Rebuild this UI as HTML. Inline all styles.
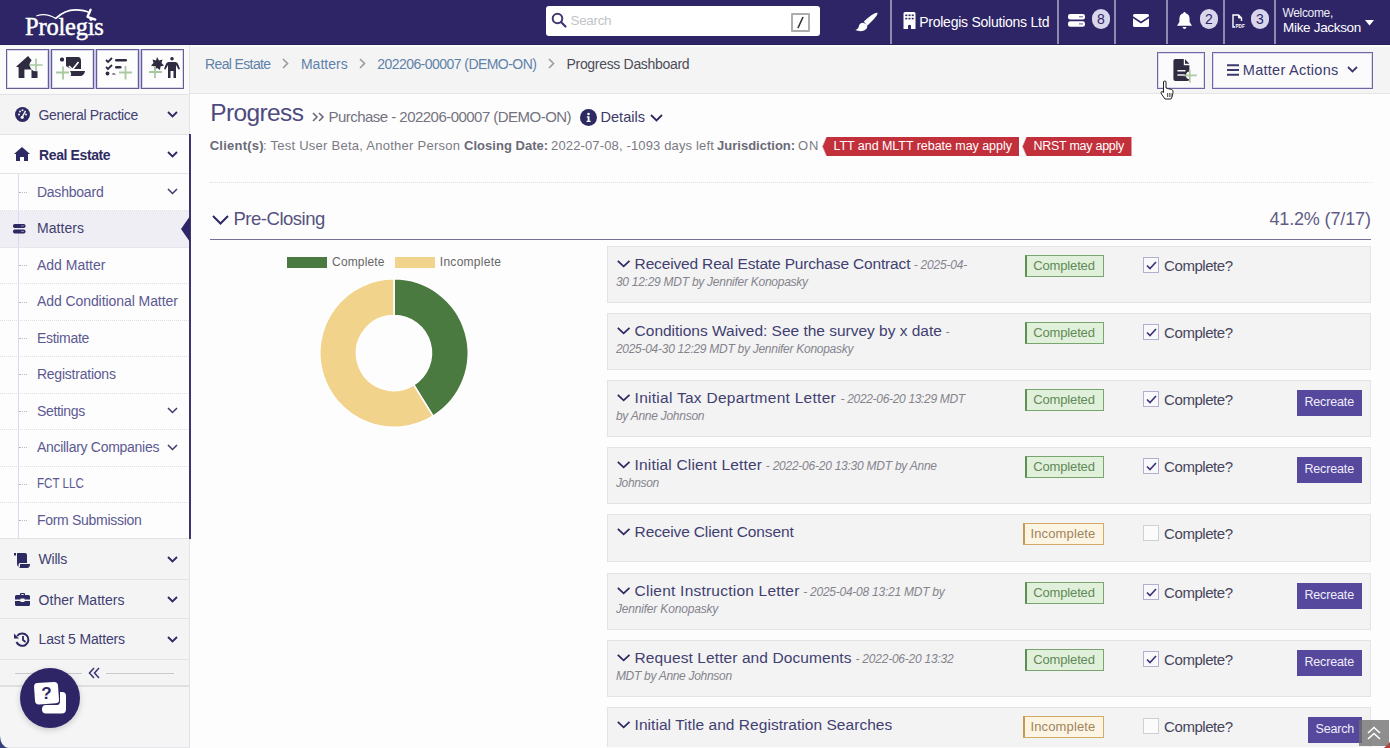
<!DOCTYPE html>
<html><head><meta charset="utf-8">
<style>
*{box-sizing:border-box;margin:0;padding:0}
html,body{width:1390px;height:748px;overflow:hidden;background:#fdfdfd;font-family:"Liberation Sans",sans-serif;position:relative}
.a{position:absolute}
.tx{position:absolute;white-space:nowrap;line-height:1}
svg{position:absolute;overflow:visible}
.sep{position:absolute;top:0;width:2px;height:44px;background:#8f8bb0}
.badge{position:absolute;top:9px;width:18px;height:20px;border-radius:9px;background:#d9d6ec;color:#2e2567;font-size:14px;text-align:center;line-height:20px}
.tb{position:absolute;top:49px;width:43px;height:40px;border:1px solid #635f8e;box-shadow:inset 0 0 0 1px #d9d6ef;background:#fdfdfd}
.row{position:absolute;left:0;width:189px;background:#f4f4f5;border-bottom:1px solid #e3e3e6}
.srow{position:absolute;left:0;width:189px;background:#fdfdfd;border-bottom:1px dotted #dedee3}
.card{position:absolute;left:607px;width:764px;background:#f3f3f4;border:1px solid #e3e3e5}
.st{position:absolute;height:22px}
.done{left:417px;width:79px;background:#e1f0da;border:1px solid #79a56e;border-left:2px solid #5d8f52}
.inc{left:415px;width:81px;background:#fdf5e4;border:1px solid #d2ac66;border-left:2px solid #c49a50}
.cb{position:absolute;left:536px;width:16px;height:16px;border:1px solid #b3b0cf;background:#f9f9fb}
.btn{position:absolute;height:26px;background:#56489d}
</style></head><body>

<!-- NAVBAR -->
<div class="a" style="left:0;top:0;width:1390px;height:45px;background:#2d2566"></div>
<div class="a" style="left:0;top:44px;width:1390px;height:1px;background:#282058"></div>
<!-- logo -->
<svg style="left:36px;top:8px" width="62" height="14" viewBox="0 0 62 14">
  <path d="M0.8 7.8 Q10 4.5 19.7 10.4" fill="none" stroke="#fff" stroke-width="1.2" stroke-linecap="round"/>
  <path d="M19.7 10.4 C26 4.5 33 1.8 39.3 1.8 C46 1.8 51 3.2 53.6 4.8" fill="none" stroke="#fff" stroke-width="1.8" stroke-linecap="round"/>
  <path d="M54.6 1.8 L51.5 8.8 L59.3 11.6" fill="none" stroke="#fff" stroke-width="2.3" stroke-linejoin="round" stroke-linecap="round"/>
</svg>
<!-- search -->
<div class="a" style="left:546px;top:6px;width:274px;height:30px;background:#fff;border-radius:3px"></div>
<svg style="left:551px;top:12px" width="16" height="16" viewBox="0 0 16 16">
  <circle cx="6.5" cy="6.5" r="4.8" fill="none" stroke="#3d3773" stroke-width="2"/>
  <path d="M10 10 L14.5 14.5" stroke="#3d3773" stroke-width="2.2" stroke-linecap="round"/>
</svg>
<div class="a" style="left:791px;top:12.5px;width:19px;height:19px;border:2px solid #adadb0;border-radius:1px"></div>
<svg style="left:791px;top:12.5px" width="19" height="19" viewBox="0 0 19 19"><path d="M11.8 4.5 L7.2 14.5" stroke="#333" stroke-width="1.6" stroke-linecap="round"/></svg>
<!-- brush -->
<svg style="left:855px;top:12px" width="23" height="20" viewBox="0 0 23 20">
  <path d="M22.5 0.8 C20 0.2 12.5 5.5 8.8 9.8 L12.6 13.4 C16.8 9.6 23.2 3.2 22.5 0.8 Z" fill="#fff"/>
  <path d="M8 10.8 C5.3 10.8 4 13 3.7 14.8 C3.5 16.4 2 17.6 0.3 18 C4 19.8 9.5 19.6 11.8 16.3 C12.6 14.9 12.3 12.8 11.3 12 Z" fill="#fff"/>
</svg>
<div class="sep" style="left:890px"></div>
<!-- building -->
<svg style="left:903px;top:12px" width="13" height="17" viewBox="0 0 13 17">
  <path d="M0.5 1.5 Q0.5 0 2 0 L11 0 Q12.5 0 12.5 1.5 L12.5 17 L8 17 L8 13.5 Q6.5 12 5 13.5 L5 17 L0.5 17 Z" fill="#fff"/>
  <g fill="#2d2566"><rect x="2.3" y="2.5" width="2" height="1.6"/><rect x="5.5" y="2.5" width="2" height="1.6"/><rect x="8.7" y="2.5" width="2" height="1.6"/><rect x="2.3" y="5.8" width="2" height="1.6"/><rect x="5.5" y="5.8" width="2" height="1.6"/><rect x="8.7" y="5.8" width="2" height="1.6"/></g>
</svg>
<div class="sep" style="left:1057px"></div>
<!-- server -->
<svg style="left:1068px;top:14px" width="17" height="13" viewBox="0 0 17 13">
  <rect x="0" y="0" width="17" height="5.5" rx="2.2" fill="#fff"/><rect x="0" y="7.2" width="17" height="5.5" rx="2.2" fill="#fff"/>
  <rect x="11" y="2" width="4" height="1.4" fill="#8c86b8"/><rect x="11" y="9.2" width="4" height="1.4" fill="#8c86b8"/>
</svg>
<div class="badge" style="left:1092px">8</div>
<div class="sep" style="left:1114px"></div>
<!-- mail -->
<svg style="left:1133px;top:14px" width="16" height="13" viewBox="0 0 16 13">
  <path d="M0 1.5 Q0 0 1.5 0 L14.5 0 Q16 0 16 1.5 L16 2.2 L8 7.5 L0 2.2 Z" fill="#fff"/>
  <path d="M0 4.3 L8 9.6 L16 4.3 L16 11.5 Q16 13 14.5 13 L1.5 13 Q0 13 0 11.5 Z" fill="#fff"/>
</svg>
<div class="sep" style="left:1166px"></div>
<!-- bell -->
<svg style="left:1177px;top:12px" width="15" height="17" viewBox="0 0 15 17">
  <path d="M7.5 0 C8.3 0 8.7 0.6 8.7 1.3 C11.5 1.9 12.6 4.3 12.6 7 L12.6 10 L15 13.8 L0 13.8 L2.4 10 L2.4 7 C2.4 4.3 3.5 1.9 6.3 1.3 C6.3 0.6 6.7 0 7.5 0 Z" fill="#fff"/>
  <path d="M5.5 15 L9.5 15 Q9 17 7.5 17 Q6 17 5.5 15 Z" fill="#fff"/>
</svg>
<div class="badge" style="left:1200px">2</div>
<div class="sep" style="left:1223px"></div>
<!-- pdf -->
<svg style="left:1232px;top:14px" width="14" height="14" viewBox="0 0 14 14">
  <path d="M1 11 L1 1 L6.5 1 L9.5 4 L9.5 7" fill="none" stroke="#fff" stroke-width="1.4"/>
  <path d="M6.5 1 L6.5 4 L9.5 4" fill="#fff" stroke="#fff" stroke-width="1"/>
  <path d="M1 11 L1 13 L3 13" fill="none" stroke="#fff" stroke-width="1.4"/>
  <text x="3.5" y="13.5" font-family="Liberation Sans" font-size="4.6" font-weight="bold" fill="#fff">PDF</text>
</svg>
<div class="badge" style="left:1251px">3</div>
<div class="sep" style="left:1274px"></div>
<svg style="left:1365px;top:20px" width="9" height="6" viewBox="0 0 9 6"><path d="M0 0 L9 0 L4.5 5.5 Z" fill="#fff"/></svg>

<!-- SUBHEADER -->
<div class="a" style="left:190px;top:45px;width:1200px;height:49px;background:#f4f4f5;border-top:2px solid #fcfcfd;border-bottom:1px solid #e6e6e8"></div>
<div class="a" style="left:0;top:45px;width:190px;height:50px;background:#fafafb;border-right:1px solid #e4e4e6;border-bottom:1px solid #e2e2e5"></div>
<div class="a" style="left:48px;top:49px;width:3px;height:40px;background:#c9c5ec"></div>
<div class="a" style="left:93px;top:49px;width:3px;height:40px;background:#c9c5ec"></div>
<div class="a" style="left:138px;top:49px;width:3px;height:40px;background:#c9c5ec"></div>
<div class="tb" style="left:5.5px;width:43px"></div>
<div class="tb" style="left:50.5px;width:43px"></div>
<div class="tb" style="left:95.5px;width:43px"></div>
<div class="tb" style="left:140.5px;width:43px"></div>
<!-- toolbar icons -->
<svg style="left:16px;top:56px" width="27" height="23" viewBox="0 0 27 23">
  <path d="M12 0 L0 10.8 L2.6 11.2 L2.6 22 L8.4 22 L8.4 13.4 L15.5 13.4 L15.5 22 L21.5 22 L21.5 11 Z" fill="#2f2c41"/>
  <circle cx="20" cy="9" r="6.3" fill="#fdfdfd"/>
  <path d="M20 2.4 L20 14.7 M13.3 9 L26.6 9" stroke="#a9c9a1" stroke-width="1.7"/>
</svg>
<svg style="left:55px;top:57px" width="32" height="22" viewBox="0 0 32 22">
  <rect x="5" y="0.5" width="4" height="4" rx="1.5" fill="#2f2c41"/>
  <path d="M11 0 L23 0 Q26 0 26 4 L26 12 L16 12 L11 9 Z" fill="#2f2c41"/>
  <path d="M14 9 L17.5 12.5 L23.5 5" fill="none" stroke="#fff" stroke-width="1.7"/>
  <path d="M15 14 L30 14 Q29.5 18 26 19 L15.5 19 Q17 17 15 14 Z" fill="#2f2c41"/>
  <path d="M8 9.5 L8 22.5 M1 15.5 L14 15.5" stroke="#a9c9a1" stroke-width="1.8"/>
</svg>
<svg style="left:105px;top:57px" width="27" height="22" viewBox="0 0 27 22">
  <path d="M1 3 L3 5 L7 1 M1 10 L3 12 L7 8" fill="none" stroke="#2f2c41" stroke-width="1.8"/>
  <rect x="10" y="2" width="12" height="2.6" rx="1.3" fill="#2f2c41"/>
  <rect x="10" y="9" width="6.5" height="2.6" rx="1.3" fill="#2f2c41"/>
  <circle cx="2.5" cy="16.5" r="1.9" fill="#2f2c41"/>
  <path d="M7 17.5 Q8 15 11 17.5 Z" fill="#2f2c41"/>
  <path d="M20.5 9 L20.5 22.5 M14 15.5 L27 15.5" stroke="#a9c9a1" stroke-width="1.8"/>
</svg>
<svg style="left:150px;top:57px" width="30" height="22" viewBox="0 0 30 22">
  <path d="M7 0 L9 3.5 L12.5 2.5 L11.5 6 L14 8.5 L10.5 9.5 L10 13 L7 11 L4 13 L4.5 9.5 L1 8.5 L3.5 6 L2.5 2.5 L6 3.5 Z" fill="#2f2c41"/>
  <circle cx="22" cy="1.8" r="1.8" fill="#2f2c41"/>
  <path d="M18.5 5 L25.5 5 Q27.5 5 28.5 8 L30 12 L28.5 12.5 L26 8 L26 21 L23.5 21 L23.5 14 L20.5 14 L20.5 21 L18 21 L18 8 L15.5 12.5 L14 12 L15.5 8 Q16.5 5 18.5 5 Z" fill="#2f2c41"/>
  <path d="M5 9 L5 21 M-1 15 L12 15" stroke="#a9c9a1" stroke-width="1.8"/>
</svg>

<!-- subheader right buttons -->
<div class="a" style="left:1157px;top:52px;width:48px;height:37px;border:1px solid #6d67a6;box-shadow:inset 0 0 0 1px #dcd9ee;background:#fbfbfc"></div>
<svg style="left:1173px;top:59px" width="25" height="25" viewBox="0 0 25 25">
  <path d="M2.4 0 L10.8 0 L10.8 6.2 L16.4 6.2 L16.4 20 Q16.4 22 14.4 22 L2.4 22 Q0.4 22 0.4 20 L0.4 2 Q0.4 0 2.4 0 Z" fill="#2f2c41"/>
  <path d="M12 0.3 L16.4 4.8 L12 4.8 Z" fill="#2f2c41"/>
  <circle cx="16.8" cy="16.4" r="3.8" fill="#fdfdfd"/>
  <path d="M4.4 11.7 L12.5 11.7 M4.4 16 L11.5 16" stroke="#f4f4f6" stroke-width="1.6"/>
  <path d="M16.8 10.4 L16.8 23.4 M10.4 16.4 L23.8 16.4" stroke="#a9c9a1" stroke-width="1.7"/>
</svg>
<div class="a" style="left:1212px;top:52px;width:161px;height:37px;border:1px solid #6d67a6;box-shadow:inset 0 0 0 1px #dcd9ee;background:#fbfbfc"></div>
<svg style="left:1227px;top:64px" width="12" height="12" viewBox="0 0 12 12"><path d="M0 1.2 H12 M0 6 H12 M0 10.8 H12" stroke="#3d3a6d" stroke-width="2"/></svg>
<svg style="left:1347px;top:66px" width="11" height="7" viewBox="0 0 11 7"><path d="M1 1 L5.5 5.5 L10 1" fill="none" stroke="#3d3a6d" stroke-width="1.8"/></svg>
<!-- breadcrumb separators -->
<svg style="left:282px;top:58px" width="7" height="11" viewBox="0 0 7 11"><path d="M1 1 L5.5 5.5 L1 10" fill="none" stroke="#9a9aa0" stroke-width="1.6"/></svg>
<svg style="left:359px;top:58px" width="7" height="11" viewBox="0 0 7 11"><path d="M1 1 L5.5 5.5 L1 10" fill="none" stroke="#9a9aa0" stroke-width="1.6"/></svg>
<svg style="left:548px;top:58px" width="7" height="11" viewBox="0 0 7 11"><path d="M1 1 L5.5 5.5 L1 10" fill="none" stroke="#9a9aa0" stroke-width="1.6"/></svg>

<!-- SIDEBAR -->
<div class="a" style="left:0;top:95px;width:190px;height:653px;background:#f5f5f6;border-right:1px solid #e3e3e6"></div>
<div class="row" style="top:95px;height:40px"></div>
<div class="srow" style="top:135px;height:39px;border-bottom:1px solid #e6e6e9"></div>
<div class="srow" style="top:174px;height:36.5px"></div>
<div class="srow" style="top:210.5px;height:37px;background:#efeef5"></div>
<div class="srow" style="top:247.5px;height:36.5px"></div>
<div class="srow" style="top:284px;height:36.5px"></div>
<div class="srow" style="top:320.5px;height:36.5px"></div>
<div class="srow" style="top:357px;height:36.5px"></div>
<div class="srow" style="top:393.5px;height:36.5px"></div>
<div class="srow" style="top:430px;height:36.5px"></div>
<div class="srow" style="top:466.5px;height:36px"></div>
<div class="srow" style="top:502.5px;height:36.5px;border-bottom:1px solid #e3e3e6"></div>
<div class="row" style="top:539px;height:41px"></div>
<div class="row" style="top:580px;height:39px"></div>
<div class="row" style="top:619px;height:41px"></div>
<div class="row" style="top:660px;height:27px;border-bottom:2px solid #e0e0e3"></div>
<!-- tree line -->
<div class="a" style="left:18px;top:174px;width:1px;height:365px;background:#d9dcef"></div>
<div class="a" style="left:19px;top:192px;width:8px;border-top:1px dotted #b8b8c4"></div>
<div class="a" style="left:19px;top:265px;width:8px;border-top:1px dotted #b8b8c4"></div>
<div class="a" style="left:19px;top:302px;width:8px;border-top:1px dotted #b8b8c4"></div>
<div class="a" style="left:19px;top:338px;width:8px;border-top:1px dotted #b8b8c4"></div>
<div class="a" style="left:19px;top:374px;width:8px;border-top:1px dotted #b8b8c4"></div>
<div class="a" style="left:19px;top:411px;width:8px;border-top:1px dotted #b8b8c4"></div>
<div class="a" style="left:19px;top:447px;width:8px;border-top:1px dotted #b8b8c4"></div>
<div class="a" style="left:19px;top:484px;width:8px;border-top:1px dotted #b8b8c4"></div>
<div class="a" style="left:19px;top:520px;width:8px;border-top:1px dotted #b8b8c4"></div>
<!-- purple right border -->
<div class="a" style="left:188.5px;top:134px;width:2.5px;height:405px;background:#3b3570"></div>
<svg style="left:180.5px;top:216px" width="9" height="26" viewBox="0 0 9 26"><path d="M9 0 L0 13 L9 26 Z" fill="#2d2566"/></svg>
<!-- sidebar icons -->
<svg style="left:14.5px;top:107px" width="15" height="15" viewBox="0 0 15 15">
  <circle cx="7.5" cy="7.5" r="7.5" fill="#2d2962"/>
  <circle cx="4" cy="7.5" r="1" fill="#f4f4f5"/><circle cx="5" cy="4.5" r="1" fill="#f4f4f5"/><circle cx="7.5" cy="3.2" r="1" fill="#f4f4f5"/><circle cx="11" cy="7.5" r="1" fill="#f4f4f5"/>
  <path d="M10.5 3.8 L7.5 9.5" stroke="#f4f4f5" stroke-width="1.5"/><circle cx="7.2" cy="10.3" r="1.6" fill="#f4f4f5"/>
</svg>
<svg style="left:14px;top:147px" width="16" height="14" viewBox="0 0 16 14">
  <path d="M8 0 L16 7 L14 7 L14 14 L10 14 L10 10 L6 10 L6 14 L2 14 L2 7 L0 7 Z" fill="#2d2962"/>
</svg>
<svg style="left:13px;top:224px" width="12.5" height="9.5" viewBox="0 0 12.5 9.5">
  <rect x="0" y="0" width="12.5" height="4" rx="1.7" fill="#2d2962"/><rect x="0" y="5.5" width="12.5" height="4" rx="1.7" fill="#2d2962"/>
  <rect x="8" y="1.4" width="3" height="1" fill="#8c86b8"/><rect x="8" y="6.9" width="3" height="1" fill="#8c86b8"/>
</svg>
<svg style="left:14px;top:553px" width="16" height="15" viewBox="0 0 16 15">
  <rect x="0" y="0" width="2" height="2.5" fill="#2d2962"/>
  <path d="M3 0 L11 0 Q13 0 13 2 L13 10 L6 10 Q4.5 10 4.5 12 L4.5 14 Q3 13 3 11 Z" fill="#2d2962"/>
  <path d="M6 11 L16 11 Q16 15 13 15 L5 15 Q6.5 14 6 11 Z" fill="#2d2962"/>
</svg>
<svg style="left:14.5px;top:593px" width="15" height="13" viewBox="0 0 15 13">
  <path d="M5 2 L5 0.8 Q5 0 6 0 L9 0 Q10 0 10 0.8 L10 2 L13.5 2 Q15 2 15 3.5 L15 6.5 L9.5 6.5 L9.5 5.5 L5.5 5.5 L5.5 6.5 L0 6.5 L0 3.5 Q0 2 1.5 2 Z M6.3 1 L6.3 2 L8.7 2 L8.7 1 Z" fill="#2d2962" fill-rule="evenodd"/>
  <path d="M0 8 L5.5 8 L5.5 9 L9.5 9 L9.5 8 L15 8 L15 11.5 Q15 13 13.5 13 L1.5 13 Q0 13 0 11.5 Z" fill="#2d2962"/>
</svg>
<svg style="left:14px;top:632px" width="16" height="15" viewBox="0 0 16 15">
  <path d="M3.2 4 A6.2 6.2 0 1 1 2.5 10" fill="none" stroke="#2d2962" stroke-width="2"/>
  <path d="M0 1.5 L0 6.5 L5 6.5 Z" fill="#2d2962"/>
  <path d="M9 4 L9 8 L11.5 10" fill="none" stroke="#2d2962" stroke-width="1.8"/>
</svg>
<!-- sidebar chevrons -->
<svg style="left:166.5px;top:111px" width="11" height="7" viewBox="0 0 11 7"><path d="M1 1 L5.5 5.5 L10 1" fill="none" stroke="#2d2962" stroke-width="1.8"/></svg>
<svg style="left:166.5px;top:151px" width="11" height="7" viewBox="0 0 11 7"><path d="M1 1 L5.5 5.5 L10 1" fill="none" stroke="#2d2962" stroke-width="1.8"/></svg>
<svg style="left:166.5px;top:188px" width="11" height="7" viewBox="0 0 11 7"><path d="M1 1 L5.5 5.5 L10 1" fill="none" stroke="#3d3a72" stroke-width="1.5"/></svg>
<svg style="left:166.5px;top:407px" width="11" height="7" viewBox="0 0 11 7"><path d="M1 1 L5.5 5.5 L10 1" fill="none" stroke="#3d3a72" stroke-width="1.5"/></svg>
<svg style="left:167px;top:444px" width="11" height="7" viewBox="0 0 11 7"><path d="M1 1 L5.5 5.5 L10 1" fill="none" stroke="#3d3a72" stroke-width="1.5"/></svg>
<svg style="left:166.5px;top:556px" width="11" height="7" viewBox="0 0 11 7"><path d="M1 1 L5.5 5.5 L10 1" fill="none" stroke="#2d2962" stroke-width="1.8"/></svg>
<svg style="left:166.5px;top:596px" width="11" height="7" viewBox="0 0 11 7"><path d="M1 1 L5.5 5.5 L10 1" fill="none" stroke="#2d2962" stroke-width="1.8"/></svg>
<svg style="left:166.5px;top:636px" width="11" height="7" viewBox="0 0 11 7"><path d="M1 1 L5.5 5.5 L10 1" fill="none" stroke="#2d2962" stroke-width="1.8"/></svg>
<!-- collapse -->
<div class="a" style="left:15px;top:673px;width:67px;height:1px;background:#c9c9d0"></div>
<div class="a" style="left:106px;top:673px;width:68px;height:1px;background:#c9c9d0"></div>
<svg style="left:88px;top:667px" width="12" height="12" viewBox="0 0 12 12"><path d="M6 1 L1.5 6 L6 11 M11 1 L6.5 6 L11 11" fill="none" stroke="#3d3a78" stroke-width="1.6"/></svg>
<div class="a" style="left:0;top:747px;width:190px;height:1px;background:#e6e6e9"></div>
<!-- help bubble -->
<div class="a" style="left:20px;top:668px;width:60px;height:60px;border-radius:30px;background:#2d2566;box-shadow:0 2px 6px rgba(0,0,0,0.18)"></div>
<svg style="left:34px;top:682px" width="33" height="33" viewBox="0 0 33 33">
  <path d="M9 10 L28 10 Q32 10 32 14 L32 27 Q32 31.5 27.5 31.5 L12 31.5 Q8 31.5 8 27.5 Z" fill="#fff"/>
  <path d="M8 10 L8 27 Q8 23 12 23 L23 23 Q26 23 26 19 L26 10 Z" fill="#2d2566"/>
  <path d="M4 0.5 L20.5 0.5 Q24.5 0.5 24.5 4.5 L24.5 19 Q24.5 22 21 22 L4.5 22 Q0.5 22 0.5 18 L0.5 4.5 Q0.5 0.5 4 0.5 Z" fill="#fff" transform="rotate(-4 12 11)"/>
  <text x="12.5" y="17" text-anchor="middle" font-family="Liberation Sans" font-weight="bold" font-size="17" fill="#2d2566">?</text>
</svg>
<svg style="left:0;top:736px" width="9" height="12" viewBox="0 0 9 12"><path d="M0 0 Q0.5 10 8 12 L0 12 Z" fill="#33407a"/></svg>
<svg style="left:1384px;top:742px" width="6" height="6" viewBox="0 0 6 6"><path d="M6 0 L6 6 L0 6 Z" fill="#c0393a"/></svg>

<!-- MAIN HEADER -->
<svg style="left:312px;top:112px" width="13" height="10" viewBox="0 0 13 10"><path d="M1 1 L5 5 L1 9 M7 1 L11 5 L7 9" fill="none" stroke="#6c6b75" stroke-width="1.6"/></svg>
<div class="a" style="left:579.5px;top:108.5px;width:17px;height:17px;border-radius:9px;background:#2d2962"></div>
<svg style="left:579.5px;top:108.5px" width="17" height="17" viewBox="0 0 17 17">
  <circle cx="8.5" cy="5" r="1.3" fill="#fff"/>
  <path d="M6.8 7.3 L9.5 7.3 L9.5 11.8 L10.6 11.8 L10.6 13 L6.6 13 L6.6 11.8 L7.7 11.8 L7.7 8.5 L6.8 8.5 Z" fill="#fff"/>
</svg>
<svg style="left:649.5px;top:114px" width="13" height="8" viewBox="0 0 13 8"><path d="M1 1 L6.5 6.5 L12 1" fill="none" stroke="#2d2962" stroke-width="1.8"/></svg>
<!-- tags -->
<svg style="left:822px;top:136.5px" width="197" height="19" viewBox="0 0 197 19"><path d="M4.5 0 L197 0 L197 19 L4.5 19 L0.5 9.5 Z" fill="#c2303c"/><path d="M4.5 0 L0.5 9.5 L4.5 19" fill="none" stroke="#e7a3a8" stroke-width="1" opacity="0.6"/></svg>
<svg style="left:1022px;top:136.5px" width="109.5" height="19" viewBox="0 0 109.5 19"><path d="M4.5 0 L109.5 0 L109.5 19 L4.5 19 L0.5 9.5 Z" fill="#c2303c"/><path d="M4.5 0 L0.5 9.5 L4.5 19" fill="none" stroke="#e7a3a8" stroke-width="1" opacity="0.6"/></svg>

<div class="a" style="left:210px;top:182px;width:1162px;border-top:1px dotted #e2e2e6"></div>
<svg style="left:212px;top:215px" width="17" height="10" viewBox="0 0 17 10"><path d="M1 1 L8.5 8.5 L16 1" fill="none" stroke="#2d2962" stroke-width="2"/></svg>
<div class="a" style="left:210px;top:238.5px;width:1161px;height:1.5px;background:#75729a"></div>

<!-- CHART -->
<div class="a" style="left:286.5px;top:256.5px;width:40px;height:11.5px;background:#4a7a40"></div>
<div class="a" style="left:394.5px;top:256.5px;width:40px;height:11.5px;background:#f2d38b"></div>
<svg style="left:313.6px;top:272.8px" width="160" height="160" viewBox="-80 -80 160 160">
  <path d="M0.00 -74.20 A74.2 74.2 0 0 1 39.06 63.09 L19.74 31.88 A37.5 37.5 0 0 0 0.00 -37.50 Z" fill="#4a7a40" stroke="#fff" stroke-width="1.5"/>
  <path d="M39.06 63.09 A74.2 74.2 0 1 1 -0.00 -74.20 L-0.00 -37.50 A37.5 37.5 0 1 0 19.74 31.88 Z" fill="#f2d38b" stroke="#fff" stroke-width="1.5"/>
</svg>

<!-- CARDS -->
<div class="card" style="top:246px;height:57px;">
<div class="st done" style="top:8px"></div>
<div class="cb" style="top:10px;left:535px;"></div>
<svg style="left:8.5px;top:13.4px" width="14" height="8" viewBox="0 0 14 8"><path d="M0.8 0.8 L6.65 6.3 L12.5 0.8" fill="none" stroke="#2d2962" stroke-width="1.8"/></svg>
<svg style="left:538px;top:14px" width="11" height="9" viewBox="0 0 11 9"><path d="M1 4.5 L4 7.5 L10 1" fill="none" stroke="#3b357a" stroke-width="1.7"/></svg>
</div>
<div class="card" style="top:313px;height:57px;">
<div class="st done" style="top:8px"></div>
<div class="cb" style="top:10px;left:535px;"></div>
<svg style="left:8.5px;top:13.4px" width="14" height="8" viewBox="0 0 14 8"><path d="M0.8 0.8 L6.65 6.3 L12.5 0.8" fill="none" stroke="#2d2962" stroke-width="1.8"/></svg>
<svg style="left:538px;top:14px" width="11" height="9" viewBox="0 0 11 9"><path d="M1 4.5 L4 7.5 L10 1" fill="none" stroke="#3b357a" stroke-width="1.7"/></svg>
</div>
<div class="card" style="top:380px;height:57px;">
<div class="st done" style="top:8px"></div>
<div class="cb" style="top:10px;left:535px;"></div>
<svg style="left:8.5px;top:13.4px" width="14" height="8" viewBox="0 0 14 8"><path d="M0.8 0.8 L6.65 6.3 L12.5 0.8" fill="none" stroke="#2d2962" stroke-width="1.8"/></svg>
<svg style="left:538px;top:14px" width="11" height="9" viewBox="0 0 11 9"><path d="M1 4.5 L4 7.5 L10 1" fill="none" stroke="#3b357a" stroke-width="1.7"/></svg>
<div class="btn" style="left:689px;top:8.5px;width:65px"></div>
</div>
<div class="card" style="top:447px;height:57px;">
<div class="st done" style="top:8px"></div>
<div class="cb" style="top:10px;left:535px;"></div>
<svg style="left:8.5px;top:13.4px" width="14" height="8" viewBox="0 0 14 8"><path d="M0.8 0.8 L6.65 6.3 L12.5 0.8" fill="none" stroke="#2d2962" stroke-width="1.8"/></svg>
<svg style="left:538px;top:14px" width="11" height="9" viewBox="0 0 11 9"><path d="M1 4.5 L4 7.5 L10 1" fill="none" stroke="#3b357a" stroke-width="1.7"/></svg>
<div class="btn" style="left:689px;top:8.5px;width:65px"></div>
</div>
<div class="card" style="top:514px;height:48px;">
<div class="st inc" style="top:8px"></div>
<div class="cb" style="top:10px;left:535px;border-color:#cfcfd6;background:#fbfbfc;"></div>
<svg style="left:8.5px;top:13.4px" width="14" height="8" viewBox="0 0 14 8"><path d="M0.8 0.8 L6.65 6.3 L12.5 0.8" fill="none" stroke="#2d2962" stroke-width="1.8"/></svg>
</div>
<div class="card" style="top:573px;height:57px;">
<div class="st done" style="top:8px"></div>
<div class="cb" style="top:10px;left:535px;"></div>
<svg style="left:8.5px;top:13.4px" width="14" height="8" viewBox="0 0 14 8"><path d="M0.8 0.8 L6.65 6.3 L12.5 0.8" fill="none" stroke="#2d2962" stroke-width="1.8"/></svg>
<svg style="left:538px;top:14px" width="11" height="9" viewBox="0 0 11 9"><path d="M1 4.5 L4 7.5 L10 1" fill="none" stroke="#3b357a" stroke-width="1.7"/></svg>
<div class="btn" style="left:689px;top:8.5px;width:65px"></div>
</div>
<div class="card" style="top:640px;height:57px;">
<div class="st done" style="top:8px"></div>
<div class="cb" style="top:10px;left:535px;"></div>
<svg style="left:8.5px;top:13.4px" width="14" height="8" viewBox="0 0 14 8"><path d="M0.8 0.8 L6.65 6.3 L12.5 0.8" fill="none" stroke="#2d2962" stroke-width="1.8"/></svg>
<svg style="left:538px;top:14px" width="11" height="9" viewBox="0 0 11 9"><path d="M1 4.5 L4 7.5 L10 1" fill="none" stroke="#3b357a" stroke-width="1.7"/></svg>
<div class="btn" style="left:689px;top:8.5px;width:65px"></div>
</div>
<div class="card" style="top:707px;height:40px;border-bottom:none;">
<div class="st inc" style="top:8px"></div>
<div class="cb" style="top:10px;left:535px;border-color:#cfcfd6;background:#fbfbfc;"></div>
<svg style="left:8.5px;top:13.4px" width="14" height="8" viewBox="0 0 14 8"><path d="M0.8 0.8 L6.65 6.3 L12.5 0.8" fill="none" stroke="#2d2962" stroke-width="1.8"/></svg>
<div class="btn" style="left:700px;top:8.5px;width:54px"></div>
</div>

<!-- scroll top -->
<div class="a" style="left:1359px;top:720px;width:30px;height:26px;background:rgba(110,110,110,0.78)"></div>
<svg style="left:1366px;top:725px" width="16" height="16" viewBox="0 0 16 16"><path d="M2 8 L8 2.5 L14 8 M2 14 L8 8.5 L14 14" fill="none" stroke="#fff" stroke-width="1.6"/></svg>
<!-- cursor -->
<svg style="left:1159px;top:79.5px" width="16" height="20" viewBox="0 0 16 20">
  <path d="M4.5 1.5 Q6 0.5 7 1.5 L7 8 L12.5 9.5 Q14.5 10 14 12.5 L13 17 L12 19 L6 19 L2.5 14 Q1 12 3 11.5 L4.5 12.5 Z" fill="#fff" stroke="#222" stroke-width="1"/>
  <path d="M8.5 13 L8.5 17 M10.3 13 L10.3 17 M12 13 L12 17" stroke="#333" stroke-width="0.8"/>
</svg>

<div id="t0" class="tx" style="left:25.10px;top:14.67px;font-size:24.5px;color:#ffffff;letter-spacing:-0.217px;font-family:'Liberation Serif',serif;-webkit-text-stroke:0.45px #fff;">Prolegis</div>
<div id="t1" class="tx" style="left:570.50px;top:14.42px;font-size:13.5px;color:#c3c3c8;letter-spacing:-0.335px;">Search</div>
<div id="t2" class="tx" style="left:919.20px;top:14.70px;font-size:14px;color:#ffffff;letter-spacing:-0.244px;">Prolegis Solutions Ltd</div>
<div id="t3" class="tx" style="left:1282.50px;top:6.80px;font-size:12px;color:#eeecf7;letter-spacing:-0.334px;">Welcome,</div>
<div id="t4" class="tx" style="left:1283.10px;top:21.32px;font-size:13.5px;color:#ffffff;letter-spacing:-0.326px;">Mike Jackson</div>
<div id="t5" class="tx" style="left:205.00px;top:57.10px;font-size:14px;color:#5f82a9;letter-spacing:-0.629px;">Real Estate</div>
<div id="t6" class="tx" style="left:300.90px;top:57.10px;font-size:14px;color:#5f82a9;letter-spacing:0.037px;">Matters</div>
<div id="t7" class="tx" style="left:377.20px;top:57.10px;font-size:14px;color:#5f82a9;letter-spacing:-0.547px;">202206-00007 (DEMO-ON)</div>
<div id="t8" class="tx" style="left:566.50px;top:57.10px;font-size:14px;color:#4d4c57;letter-spacing:-0.312px;">Progress Dashboard</div>
<div id="t9" class="tx" style="left:1242.80px;top:63.27px;font-size:14.5px;color:#3d3a6d;letter-spacing:0.279px;">Matter Actions</div>
<div id="t10" class="tx" style="left:38.50px;top:107.90px;font-size:14px;color:#413e70;letter-spacing:-0.299px;">General Practice</div>
<div id="t11" class="tx" style="left:39.10px;top:147.70px;font-size:14px;color:#2f2b62;letter-spacing:-0.399px;font-weight:bold;">Real Estate</div>
<div id="t12" class="tx" style="left:36.90px;top:184.70px;font-size:14px;color:#5c5992;letter-spacing:-0.213px;">Dashboard</div>
<div id="t13" class="tx" style="left:36.90px;top:221.10px;font-size:14px;color:#413e70;letter-spacing:0.087px;">Matters</div>
<div id="t14" class="tx" style="left:36.90px;top:257.60px;font-size:14px;color:#5c5992;letter-spacing:0.013px;">Add Matter</div>
<div id="t15" class="tx" style="left:36.90px;top:294.10px;font-size:14px;color:#5c5992;letter-spacing:-0.068px;">Add Conditional Matter</div>
<div id="t16" class="tx" style="left:36.90px;top:331.10px;font-size:14px;color:#5c5992;letter-spacing:-0.281px;">Estimate</div>
<div id="t17" class="tx" style="left:36.90px;top:367.10px;font-size:14px;color:#5c5992;letter-spacing:-0.226px;">Registrations</div>
<div id="t18" class="tx" style="left:36.90px;top:403.60px;font-size:14px;color:#5c5992;letter-spacing:-0.314px;">Settings</div>
<div id="t19" class="tx" style="left:36.90px;top:440.10px;font-size:14px;color:#5c5992;letter-spacing:-0.284px;">Ancillary Companies</div>
<div id="t20" class="tx" style="left:36.90px;top:476.10px;font-size:14px;color:#5c5992;letter-spacing:0.000px;transform:scaleX(0.83);transform-origin:0 0;">FCT LLC</div>
<div id="t21" class="tx" style="left:36.90px;top:513.10px;font-size:14px;color:#5c5992;letter-spacing:-0.288px;">Form Submission</div>
<div id="t22" class="tx" style="left:38.60px;top:552.40px;font-size:14px;color:#413e70;letter-spacing:-0.239px;">Wills</div>
<div id="t23" class="tx" style="left:38.60px;top:592.70px;font-size:14px;color:#413e70;letter-spacing:0.026px;">Other Matters</div>
<div id="t24" class="tx" style="left:38.60px;top:632.30px;font-size:14px;color:#413e70;letter-spacing:-0.170px;">Last 5 Matters</div>
<div id="t25" class="tx" style="left:210.20px;top:101.38px;font-size:24.5px;color:#4d4a7e;letter-spacing:-0.607px;">Progress</div>
<div id="t26" class="tx" style="left:328.50px;top:108.85px;font-size:15px;color:#74737d;letter-spacing:-0.532px;">Purchase - 202206-00007 (DEMO-ON)</div>
<div id="t27" class="tx" style="left:600.50px;top:109.67px;font-size:14.5px;color:#3b3868;letter-spacing:0.044px;">Details</div>
<div id="t28" class="tx" style="left:209.70px;top:138.95px;font-size:13px;color:#6b6a78;letter-spacing:0.249px;font-weight:bold;">Client(s)</div>
<div id="t29" class="tx" style="left:262.90px;top:138.95px;font-size:13px;color:#7b7a84;letter-spacing:0.258px;">: Test User Beta, Another Person</div>
<div id="t30" class="tx" style="left:464.00px;top:138.95px;font-size:13px;color:#6b6a78;letter-spacing:0.026px;font-weight:bold;">Closing Date:</div>
<div id="t31" class="tx" style="left:551.00px;top:138.95px;font-size:13px;color:#7b7a84;letter-spacing:0.146px;">2022-07-08, -1093 days left</div>
<div id="t32" class="tx" style="left:717.10px;top:138.95px;font-size:13px;color:#6b6a78;letter-spacing:-0.001px;font-weight:bold;">Jurisdiction:</div>
<div id="t33" class="tx" style="left:798.00px;top:138.95px;font-size:13px;color:#7b7a84;letter-spacing:0.796px;">ON</div>
<div id="t34" class="tx" style="left:833.50px;top:139.88px;font-size:12.5px;color:#ffffff;letter-spacing:-0.047px;">LTT and MLTT rebate may apply</div>
<div id="t35" class="tx" style="left:1033.50px;top:139.88px;font-size:12.5px;color:#ffffff;letter-spacing:-0.266px;">NRST may apply</div>
<div id="t36" class="tx" style="left:233.50px;top:209.68px;font-size:18.5px;color:#55527f;letter-spacing:-0.486px;">Pre-Closing</div>
<div id="t37" class="tx" style="left:1269.40px;top:210.20px;font-size:18px;color:#5f5c86;letter-spacing:-0.142px;">41.2% (7/17)</div>
<div id="t38" class="tx" style="left:332.10px;top:256.30px;font-size:12px;color:#666666;letter-spacing:0.147px;">Complete</div>
<div id="t39" class="tx" style="left:439.80px;top:256.30px;font-size:12px;color:#666666;letter-spacing:0.277px;">Incomplete</div>
<div id="t40" class="tx" style="left:634.60px;top:256.32px;font-size:15.5px;color:#423f70;letter-spacing:-0.158px;">Received Real Estate Purchase Contract</div>
<div id="t41" class="tx" style="left:913.70px;top:259.30px;font-size:12px;color:#85848c;letter-spacing:-0.208px;font-style:italic;">- 2025-04-</div>
<div id="t42" class="tx" style="left:615.90px;top:275.60px;font-size:12px;color:#85848c;letter-spacing:-0.260px;font-style:italic;">30 12:29 MDT by Jennifer Konopasky</div>
<div id="t43" class="tx" style="left:1164.10px;top:257.55px;font-size:15px;color:#46455a;letter-spacing:-0.444px;">Complete?</div>
<div id="t44" class="tx" style="left:1033.30px;top:258.75px;font-size:13px;color:#5f8a57;letter-spacing:-0.160px;">Completed</div>
<div id="t45" class="tx" style="left:634.60px;top:323.32px;font-size:15.5px;color:#423f70;letter-spacing:-0.014px;">Conditions Waived: See the survey by x date</div>
<div id="t46" class="tx" style="left:945.50px;top:326.30px;font-size:12px;color:#85848c;letter-spacing:0.000px;font-style:italic;">-</div>
<div id="t47" class="tx" style="left:615.90px;top:342.60px;font-size:12px;color:#85848c;letter-spacing:-0.274px;font-style:italic;">2025-04-30 12:29 MDT by Jennifer Konopasky</div>
<div id="t48" class="tx" style="left:1164.10px;top:324.55px;font-size:15px;color:#46455a;letter-spacing:-0.444px;">Complete?</div>
<div id="t49" class="tx" style="left:1033.30px;top:325.75px;font-size:13px;color:#5f8a57;letter-spacing:-0.160px;">Completed</div>
<div id="t50" class="tx" style="left:634.60px;top:390.32px;font-size:15.5px;color:#423f70;letter-spacing:0.269px;">Initial Tax Department Letter</div>
<div id="t51" class="tx" style="left:840.50px;top:393.30px;font-size:12px;color:#85848c;letter-spacing:-0.320px;font-style:italic;">- 2022-06-20 13:29 MDT</div>
<div id="t52" class="tx" style="left:615.90px;top:409.60px;font-size:12px;color:#85848c;letter-spacing:-0.265px;font-style:italic;">by Anne Johnson</div>
<div id="t53" class="tx" style="left:1164.10px;top:391.55px;font-size:15px;color:#46455a;letter-spacing:-0.444px;">Complete?</div>
<div id="t54" class="tx" style="left:1033.30px;top:392.75px;font-size:13px;color:#5f8a57;letter-spacing:-0.159px;">Completed</div>
<div id="t55" class="tx" style="left:1304.40px;top:395.88px;font-size:12.5px;color:#f0eefa;letter-spacing:-0.146px;">Recreate</div>
<div id="t56" class="tx" style="left:634.60px;top:457.32px;font-size:15.5px;color:#423f70;letter-spacing:0.166px;">Initial Client Letter</div>
<div id="t57" class="tx" style="left:765.80px;top:460.30px;font-size:12px;color:#85848c;letter-spacing:-0.246px;font-style:italic;">- 2022-06-20 13:30 MDT by Anne</div>
<div id="t58" class="tx" style="left:615.90px;top:476.60px;font-size:12px;color:#85848c;letter-spacing:-0.329px;font-style:italic;">Johnson</div>
<div id="t59" class="tx" style="left:1164.10px;top:458.55px;font-size:15px;color:#46455a;letter-spacing:-0.444px;">Complete?</div>
<div id="t60" class="tx" style="left:1033.30px;top:459.75px;font-size:13px;color:#5f8a57;letter-spacing:-0.159px;">Completed</div>
<div id="t61" class="tx" style="left:1304.40px;top:462.88px;font-size:12.5px;color:#f0eefa;letter-spacing:-0.146px;">Recreate</div>
<div id="t62" class="tx" style="left:634.60px;top:524.33px;font-size:15.5px;color:#423f70;letter-spacing:-0.137px;">Receive Client Consent</div>
<div id="t63" class="tx" style="left:1164.10px;top:525.55px;font-size:15px;color:#46455a;letter-spacing:-0.444px;">Complete?</div>
<div id="t64" class="tx" style="left:1030.50px;top:526.75px;font-size:13px;color:#a0845c;letter-spacing:0.134px;">Incomplete</div>
<div id="t65" class="tx" style="left:634.60px;top:583.33px;font-size:15.5px;color:#423f70;letter-spacing:0.225px;">Client Instruction Letter</div>
<div id="t66" class="tx" style="left:803.20px;top:586.30px;font-size:12px;color:#85848c;letter-spacing:-0.243px;font-style:italic;">- 2025-04-08 13:21 MDT by</div>
<div id="t67" class="tx" style="left:615.90px;top:602.60px;font-size:12px;color:#85848c;letter-spacing:-0.177px;font-style:italic;">Jennifer Konopasky</div>
<div id="t68" class="tx" style="left:1164.10px;top:584.55px;font-size:15px;color:#46455a;letter-spacing:-0.444px;">Complete?</div>
<div id="t69" class="tx" style="left:1033.30px;top:585.75px;font-size:13px;color:#5f8a57;letter-spacing:-0.159px;">Completed</div>
<div id="t70" class="tx" style="left:1304.40px;top:588.88px;font-size:12.5px;color:#f0eefa;letter-spacing:-0.147px;">Recreate</div>
<div id="t71" class="tx" style="left:634.60px;top:650.33px;font-size:15.5px;color:#423f70;letter-spacing:0.087px;">Request Letter and Documents</div>
<div id="t72" class="tx" style="left:855.50px;top:653.30px;font-size:12px;color:#85848c;letter-spacing:-0.229px;font-style:italic;">- 2022-06-20 13:32</div>
<div id="t73" class="tx" style="left:615.90px;top:669.60px;font-size:12px;color:#85848c;letter-spacing:-0.301px;font-style:italic;">MDT by Anne Johnson</div>
<div id="t74" class="tx" style="left:1164.10px;top:651.55px;font-size:15px;color:#46455a;letter-spacing:-0.444px;">Complete?</div>
<div id="t75" class="tx" style="left:1033.30px;top:652.75px;font-size:13px;color:#5f8a57;letter-spacing:-0.159px;">Completed</div>
<div id="t76" class="tx" style="left:1304.40px;top:655.88px;font-size:12.5px;color:#f0eefa;letter-spacing:-0.146px;">Recreate</div>
<div id="t77" class="tx" style="left:634.60px;top:717.33px;font-size:15.5px;color:#423f70;letter-spacing:0.047px;">Initial Title and Registration Searches</div>
<div id="t78" class="tx" style="left:1164.10px;top:718.55px;font-size:15px;color:#46455a;letter-spacing:-0.444px;">Complete?</div>
<div id="t79" class="tx" style="left:1030.50px;top:719.75px;font-size:13px;color:#a0845c;letter-spacing:0.134px;">Incomplete</div>
<div id="t80" class="tx" style="left:1315.50px;top:722.88px;font-size:12.5px;color:#f0eefa;letter-spacing:-0.164px;">Search</div>
</body></html>
